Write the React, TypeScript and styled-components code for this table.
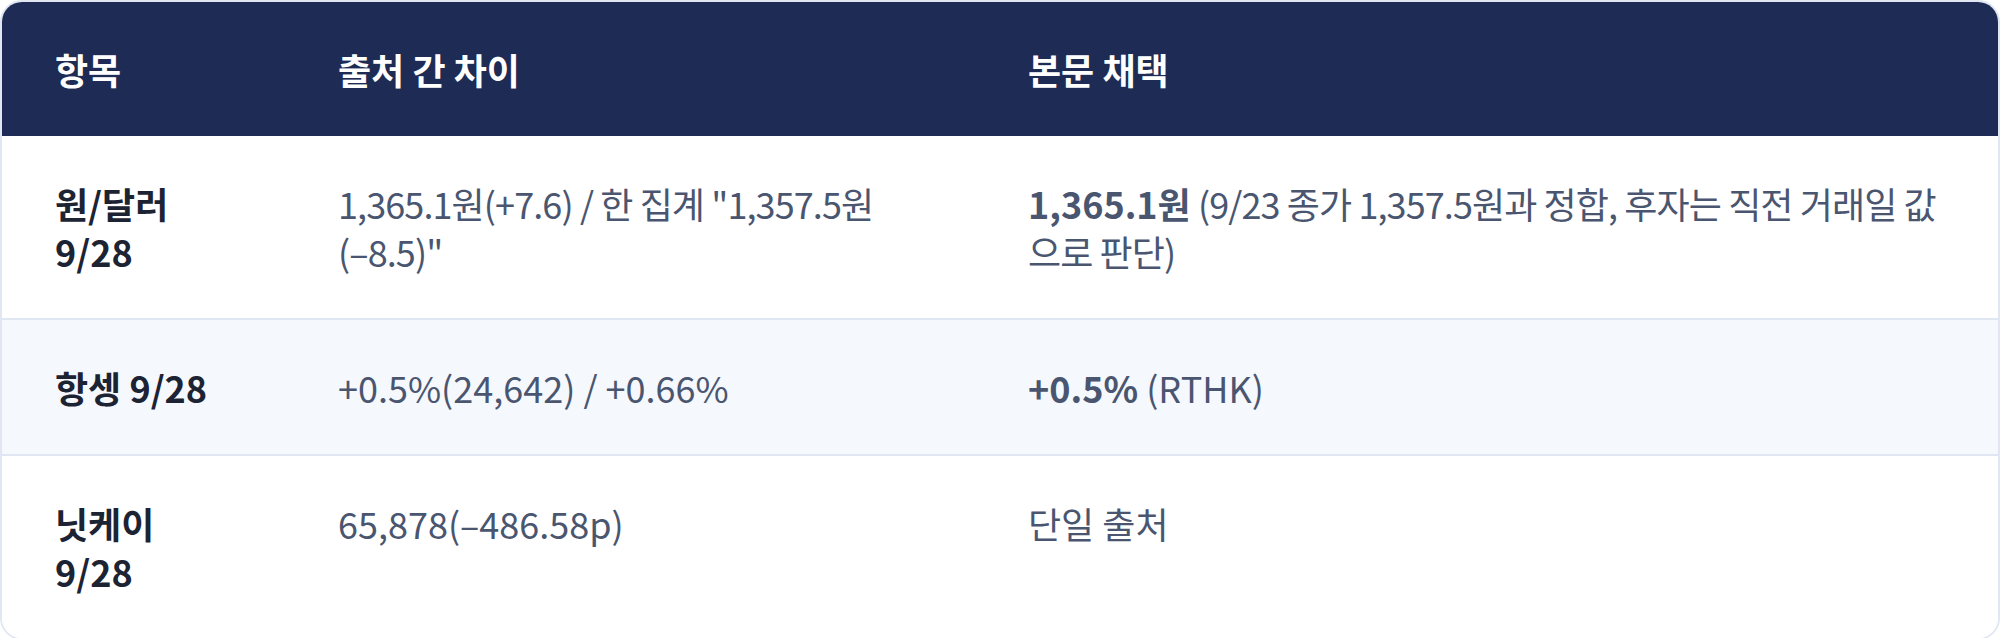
import React from 'react';
import styled, { createGlobalStyle } from 'styled-components';

const GlobalStyle = createGlobalStyle`
  html, body {
    margin: 0;
    padding: 0;
    background: #ffffff;
  }
  body {
    font-family: "Noto Sans CJK KR", "Noto Sans", sans-serif;
  }
  *, *::before, *::after {
    box-sizing: border-box;
  }
`;

const Frame = styled.div`
  width: 100%;
  border: 2px solid #e1e7f2;
  border-radius: 22px;
  overflow: hidden;
  background: #ffffff;
`;

const Table = styled.table`
  width: 100%;
  border-collapse: collapse;
  table-layout: fixed;
  font-size: 36px;
  line-height: 48px;
`;

const HeadRow = styled.tr`
  background: #1e2b54;
`;

const HeadCell = styled.th`
  padding: 43px 53px;
  text-align: left;
  font-weight: 700;
  color: #ffffff;
`;

const Row = styled.tr<{ $shaded?: boolean }>`
  background: ${p => (p.$shaded ? '#f5f8fd' : '#ffffff')};
  & + & {
    border-top: 2px solid #e1e7f2;
  }
`;

const ItemCell = styled.td`
  padding: 43px 53px;
  vertical-align: top;
  font-weight: 700;
  color: #1c2333;
`;

const Cell = styled.td<{ $tight?: boolean }>`
  padding: 43px 53px;
  vertical-align: top;
  font-weight: 400;
  color: #4a5670;
  letter-spacing: ${p => (p.$tight ? '-0.9px' : 'normal')};
`;

const Strong = styled.strong`
  font-weight: 700;
  letter-spacing: normal;
`;

const NoWrap = styled.span`
  white-space: nowrap;
`;

const rows = [
  {
    item: '원/달러 9/28',
    diff: (
      <>
        1,365.1원(+7.6) / 한 집계 "1,357.5원<NoWrap>(–8.5)"</NoWrap>
      </>
    ),
    pick: '1,365.1원',
    note: ' (9/23 종가 1,357.5원과 정합, 후자는 직전 거래일 값으로 판단)',
    tight: true,
  },
  {
    item: '항셍 9/28',
    diff: '+0.5%(24,642) / +0.66%',
    pick: '+0.5%',
    note: ' (RTHK)',
    tight: false,
  },
  {
    item: '닛케이 9/28',
    diff: '65,878(–486.58p)',
    pick: '',
    note: '단일 출처',
    tight: false,
  },
];

const App: React.FC = () => {
  return (
    <>
      <GlobalStyle />
      <Frame>
        <Table>
          <colgroup>
            <col style={{ width: '283px' }} />
            <col style={{ width: '690px' }} />
            <col />
          </colgroup>
          <thead>
            <HeadRow>
              <HeadCell>항목</HeadCell>
              <HeadCell>출처 간 차이</HeadCell>
              <HeadCell>본문 채택</HeadCell>
            </HeadRow>
          </thead>
          <tbody>
            {rows.map((row, i) => (
              <Row key={row.item} $shaded={i % 2 === 1}>
                <ItemCell>{row.item}</ItemCell>
                <Cell $tight={row.tight}>{row.diff}</Cell>
                <Cell $tight={row.tight}>
                  {row.pick && <Strong>{row.pick}</Strong>}
                  {row.note}
                </Cell>
              </Row>
            ))}
          </tbody>
        </Table>
      </Frame>
    </>
  );
};

export default App;
